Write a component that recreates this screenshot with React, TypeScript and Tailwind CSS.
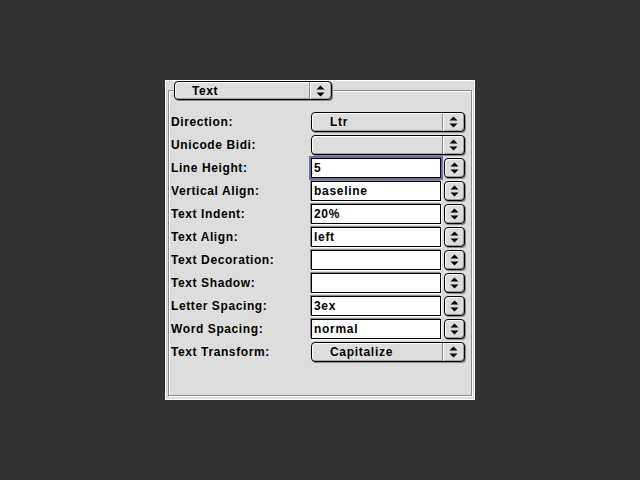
import React from "react";

const font = { fontFamily: '"Liberation Sans", Arial, sans-serif' };

function Arrows() {
  return (
    <svg width="9" height="12" viewBox="0 0 9 12">
      <polygon points="4.5,0.5 8.5,4.5 0.5,4.5" fill="#000" />
      <polygon points="0.5,7.5 8.5,7.5 4.5,11.5" fill="#000" />
    </svg>
  );
}

function Stepper() {
  return (
    <div className="w-[21px] h-[20px] rounded-[4px] border border-black bg-[#dcdcdc] shadow-[inset_1px_1px_0_#ffffff,inset_-1px_-1px_0_#9a9a9a,1px_1px_0_#8a8a8a] flex items-center justify-center">
      <Arrows />
    </div>
  );
}

function Field({ value, focused }: { value: string; focused?: boolean }) {
  return (
    <div className="flex items-center gap-[3px]">
      <div
        className={
          "w-[130px] h-[20px] bg-white border border-black flex items-center pl-[2px] text-[12px] font-bold text-black tracking-[0.7px] " +
          (focused
            ? "shadow-[0_0_0_2px_#6e6ea6]"
            : "shadow-[-1px_-1px_0_#8a8a8a,1px_1px_0_#ffffff]")
        }
      >
        {value}
      </div>
      <Stepper />
    </div>
  );
}

function Popup({ value, width, textPad }: { value: string; width: number; textPad: number }) {
  return (
    <div
      className="h-[20px] rounded-[4px] border border-black bg-[#dddddd] shadow-[inset_1px_1px_0_#ffffff,inset_-1px_-1px_0_#a0a0a0,1px_1px_0_#8a8a8a] flex items-stretch"
      style={{ width }}
    >
      <div className="flex-1 flex items-center text-[12px] font-bold text-black tracking-[0.7px]" style={{ paddingLeft: textPad }}>
        {value}
      </div>
      <div className="w-[22px] border-l border-[#8a8a8a] shadow-[inset_1px_0_0_#ffffff] flex items-center justify-center">
        <Arrows />
      </div>
    </div>
  );
}

const rows: { label: string; kind: "popup" | "field"; value: string; focused?: boolean }[] = [
  { label: "Direction:", kind: "popup", value: "Ltr" },
  { label: "Unicode Bidi:", kind: "popup", value: "" },
  { label: "Line Height:", kind: "field", value: "5", focused: true },
  { label: "Vertical Align:", kind: "field", value: "baseline" },
  { label: "Text Indent:", kind: "field", value: "20%" },
  { label: "Text Align:", kind: "field", value: "left" },
  { label: "Text Decoration:", kind: "field", value: "" },
  { label: "Text Shadow:", kind: "field", value: "" },
  { label: "Letter Spacing:", kind: "field", value: "3ex" },
  { label: "Word Spacing:", kind: "field", value: "normal" },
  { label: "Text Transform:", kind: "popup", value: "Capitalize" },
];

export default function App() {
  return (
    <div className="w-[640px] h-[480px] bg-[#333333] flex items-center justify-center" style={font}>
      <div className="w-[310px] h-[320px] bg-[#dddddd] border border-white pt-[9px] pl-[2px] pr-[2px] pb-[3px] flex flex-col">
        <div className="relative flex-1 border border-[#8a8a8a] shadow-[inset_1px_1px_0_#ffffff,1px_1px_0_#ffffff] pt-[21px] pl-[2px]">
          <div className="absolute left-[5px] top-[-10px]">
            <div className="h-[19px] w-[158px] rounded-[4px] border border-black bg-[#dddddd] shadow-[inset_1px_1px_0_#ffffff,inset_-1px_-1px_0_#a0a0a0,1px_1px_0_#8a8a8a] flex items-stretch">
              <div className="flex-1 flex items-center pl-[17px] text-[12px] font-bold text-black tracking-[0.6px]">Text</div>
              <div className="w-[22px] border-l border-[#8a8a8a] shadow-[inset_1px_0_0_#ffffff] flex items-center justify-center">
                <Arrows />
              </div>
            </div>
          </div>
          <div className="flex flex-col gap-[3px]">
            {rows.map((r) => (
              <div key={r.label} className="flex items-center h-[20px]">
                <div className="w-[140px] text-[12px] font-bold text-black tracking-[0.6px]">{r.label}</div>
                {r.kind === "popup" ? (
                  <Popup value={r.value} width={154} textPad={18} />
                ) : (
                  <Field value={r.value} focused={r.focused} />
                )}
              </div>
            ))}
          </div>
        </div>
      </div>
    </div>
  );
}
